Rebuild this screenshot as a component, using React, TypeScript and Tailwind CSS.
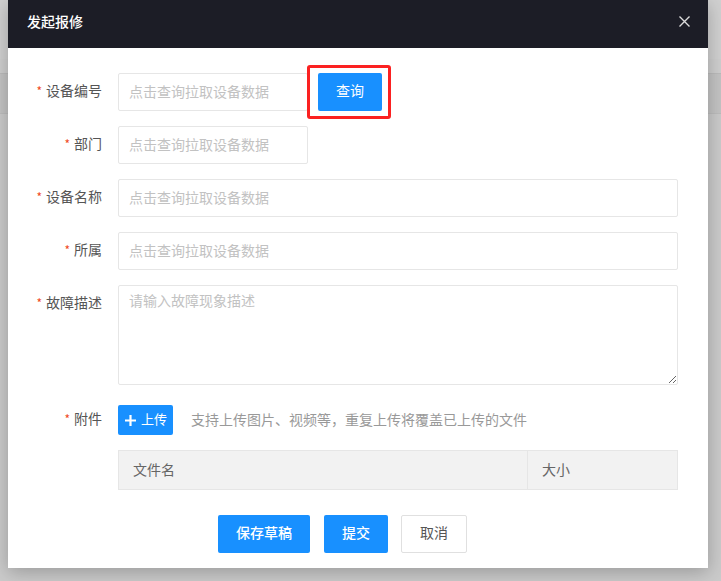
import { ReactNode } from 'react';

const FONT = { fontFamily: '"Noto Sans CJK SC", "Noto Sans", sans-serif' };

// Form label with the red required mark
const Label = ({ children }: { children: ReactNode }) => (
    <div className="w-[110px] shrink-0 pr-4 h-[38px] pb-[3px] flex items-center justify-end text-[14px] text-[#555]">
        <span className="text-[#f04a24] text-[12px] mr-[4px]">*</span>
        <span>{children}</span>
    </div>
);

const TextInput = ({ wide }: { wide?: boolean }) => (
    <input
        readOnly
        placeholder="点击查询拉取设备数据"
        className={
            (wide ? 'flex-1 ' : 'w-[190px] ') +
            'h-[38px] border border-[#e6e6e6] rounded-[2px] px-[10px] pb-[3px] text-[14px] text-[#333] placeholder:text-[#c2c2c2] outline-none bg-white'
        }
        style={FONT}
    />
);

export default function App() {
    return (
        <div className="relative w-[721px] h-[581px] overflow-hidden bg-[#cbcbcb]" style={FONT}>
            {/* page behind the overlay */}
            <div className="h-[59px] bg-[#d1d1d1]" />
            <div className="h-[15px] bg-[#cfcfcf] border-b border-[#bcbcbc]" />
            <div className="h-[40px] bg-[#c4c4c4] border-b border-[#bdbdbd]" />

            {/* modal */}
            <div className="absolute left-[8px] top-0 w-[700px] h-[568px] bg-white shadow-[0_4px_18px_rgba(0,0,0,0.25)] flex flex-col">
                <div className="h-12 shrink-0 bg-[#1c1d26] flex items-center justify-between pl-[19px] pr-[18px] pb-[5px]">
                    <span className="text-white text-[14px] font-medium">发起报修</span>
                    <svg width="11" height="11" viewBox="0 0 11 11" className="text-[#dcdcdc]">
                        <path d="M0.5 0.5L10.5 10.5M10.5 0.5L0.5 10.5" stroke="currentColor" strokeWidth="1.4" />
                    </svg>
                </div>

                <div className="flex flex-col pt-[25px] pr-[30px]">
                    <div className="flex mb-[15px]">
                        <Label>设备编号</Label>
                        <TextInput />
                        <div className="relative ml-[10px]">
                            <button className="w-16 h-[38px] pb-[3px] bg-[#1890ff] rounded-[2px] text-white text-[14px]">查询</button>
                            <span className="absolute -left-[11px] -right-[9px] -top-[8px] -bottom-[8px] border-[3px] border-[#fb2121] rounded-[3px]" />
                        </div>
                    </div>
                    <div className="flex mb-[15px]">
                        <Label>部门</Label>
                        <TextInput />
                    </div>
                    <div className="flex mb-[15px]">
                        <Label>设备名称</Label>
                        <TextInput wide />
                    </div>
                    <div className="flex mb-[15px]">
                        <Label>所属</Label>
                        <TextInput wide />
                    </div>
                    <div className="flex mb-[20px]">
                        <div className="self-start">
                            <Label>故障描述</Label>
                        </div>
                        <textarea
                            placeholder="请输入故障现象描述"
                            className="flex-1 h-[100px] border border-[#e6e6e6] rounded-[2px] px-[10px] pt-[4px] pb-[6px] text-[14px] leading-[20px] placeholder:text-[#c2c2c2] outline-none"
                            style={FONT}
                        />
                    </div>
                    <div className="flex items-center h-[30px] mb-[15px]">
                        <Label>附件</Label>
                        <button className="h-[30px] w-[55px] bg-[#1890ff] rounded-[2px] text-white text-[13px] flex items-center pl-[7px] pb-[2px] gap-[5px]">
                            <svg width="11" height="11" viewBox="0 0 11 11" className="mt-[2px]">
                                <path d="M5.5 0V11M0 5.5H11" stroke="white" strokeWidth="2.2" />
                            </svg>
                            上传
                        </button>
                        <span className="ml-[18px] pb-[2px] text-[14px] text-[#999]">支持上传图片、视频等，重复上传将覆盖已上传的文件</span>
                    </div>
                    <div className="flex">
                        <div className="w-[110px] shrink-0" />
                        <div className="flex-1 flex h-10 bg-[#f2f2f2] border border-[#e6e6e6] text-[14px] text-[#666]">
                            <div className="w-[409px] border-r border-[#e6e6e6] flex items-center pl-[14px] pb-[2px]">文件名</div>
                            <div className="flex-1 flex items-center pl-[14px] pb-[2px]">大小</div>
                        </div>
                    </div>
                </div>

                <div className="flex items-center pl-[210px] mt-[25px] text-[14px]">
                    <button className="w-[92px] h-[38px] pb-[3px] bg-[#1890ff] rounded-[2px] text-white font-medium">保存草稿</button>
                    <button className="w-16 h-[38px] pb-[3px] bg-[#1890ff] rounded-[2px] text-white font-medium ml-[14px]">提交</button>
                    <button className="w-[66px] h-[38px] pb-[3px] border border-[#e0e0e0] rounded-[2px] text-[#555] bg-white ml-[13px]">取消</button>
                </div>
            </div>
        </div>
    );
}
